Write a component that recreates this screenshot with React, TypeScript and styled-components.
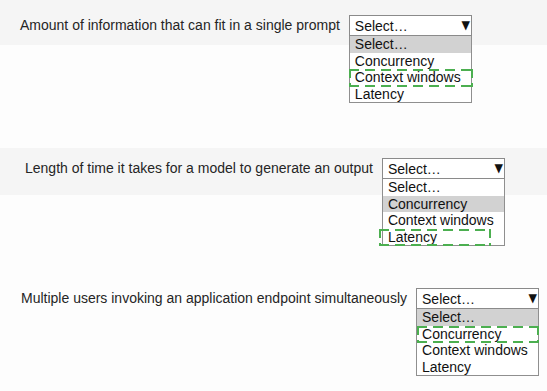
import styled, { createGlobalStyle } from 'styled-components';

const GlobalStyle = createGlobalStyle`
    html, body {
        margin: 0;
        padding: 0;
        background: #fdfdfd;
    }
    body {
        font-family: "Liberation Sans", Arial, sans-serif;
        font-size: 14px;
        color: #1a1a1a;
    }
`;

const Page = styled.div`
    width: 547px;
    height: 391px;
    display: flex;
    flex-direction: column;
    overflow: hidden;
`;

const Question = styled.section<{ $top: number; $bandFrom: number; $bandTo: number }>`
    display: flex;
    align-items: flex-start;
    gap: 9px;
    padding-top: ${(p) => p.$top}px;
    background: linear-gradient(
        transparent ${(p) => p.$bandFrom}px,
        #f5f5f5 ${(p) => p.$bandFrom}px ${(p) => p.$bandTo}px,
        transparent ${(p) => p.$bandTo}px
    );
`;

const Prompt = styled.div<{ $indent: number }>`
    padding-left: ${(p) => p.$indent}px;
    line-height: 21px;
    color: #252525;
    white-space: nowrap;
`;

const Picker = styled.div`
    width: 123px;
    display: flex;
    flex-direction: column;
`;

const SelectBox = styled.div`
    height: 21px;
    box-sizing: border-box;
    border: 1px solid #8a8a8a;
    background: #fff;
    display: flex;
    align-items: center;
    justify-content: space-between;
    padding: 0 1px 0 5px;
    color: #111;
`;

const Arrow = styled.span`
    font-family: "DejaVu Sans", sans-serif;
    font-size: 11px;
    line-height: 1;
    color: #111;
    transform: scaleY(1.1);
`;

const OptionList = styled.ul`
    list-style: none;
    margin: 0;
    padding: 0;
    border: 1px solid #8f8f8f;
    border-top: none;
    background: #fff;
`;

const Option = styled.li<{ $active?: boolean }>`
    position: relative;
    height: 16.5px;
    line-height: 16.5px;
    padding-left: 5px;
    color: #111;
    background: ${(p) => (p.$active ? '#d2d2d2' : 'transparent')};
`;

const Marked = styled.span<{ $left: number; $right: number }>`
    position: absolute;
    top: 0;
    bottom: -1px;
    left: ${(p) => p.$left}px;
    right: ${(p) => p.$right}px;
    pointer-events: none;
    background:
        repeating-linear-gradient(90deg, #4caf50 0 10px, transparent 10px 16px) top left / 100% 2px no-repeat,
        repeating-linear-gradient(90deg, #4caf50 0 10px, transparent 10px 16px) bottom left / 100% 2px no-repeat,
        repeating-linear-gradient(180deg, #4caf50 0 9px, transparent 9px 14px) top left / 2px 100% no-repeat,
        repeating-linear-gradient(180deg, #4caf50 0 9px, transparent 9px 14px) top right / 2px 100% no-repeat;
`;

const OPTIONS = ['Select…', 'Concurrency', 'Context windows', 'Latency'];

type Item = {
    prompt: string;
    indent: number;
    top: number;
    bandFrom: number;
    bandTo: number;
    active: number;
    marked: number;
    markLeft: number;
    markRight: number;
};

const ITEMS: Item[] = [
    { prompt: 'Amount of information that can fit in a single prompt', indent: 20, top: 15, bandFrom: 0, bandTo: 45, active: 0, marked: 2, markLeft: -1, markRight: -2 },
    { prompt: 'Length of time it takes for a model to generate an output', indent: 25, top: 55, bandFrom: 45, bandTo: 92, active: 1, marked: 3, markLeft: -4, markRight: 13 },
    { prompt: 'Multiple users invoking an application endpoint simultaneously', indent: 21, top: 42, bandFrom: 0, bandTo: 0, active: 0, marked: 1, markLeft: 0, markRight: -1 },
];

export default function App() {
    return (
        <Page>
            <GlobalStyle />
            {ITEMS.map((q) => (
                <Question key={q.prompt} $top={q.top} $bandFrom={q.bandFrom} $bandTo={q.bandTo}>
                    <Prompt $indent={q.indent}>{q.prompt}</Prompt>
                    <Picker>
                        <SelectBox>
                            <span>Select…</span>
                            <Arrow>▼</Arrow>
                        </SelectBox>
                        <OptionList>
                            {OPTIONS.map((o, i) => (
                                <Option key={o} $active={i === q.active}>
                                    {o}
                                    {i === q.marked && <Marked $left={q.markLeft} $right={q.markRight} />}
                                </Option>
                            ))}
                        </OptionList>
                    </Picker>
                </Question>
            ))}
        </Page>
    );
}
